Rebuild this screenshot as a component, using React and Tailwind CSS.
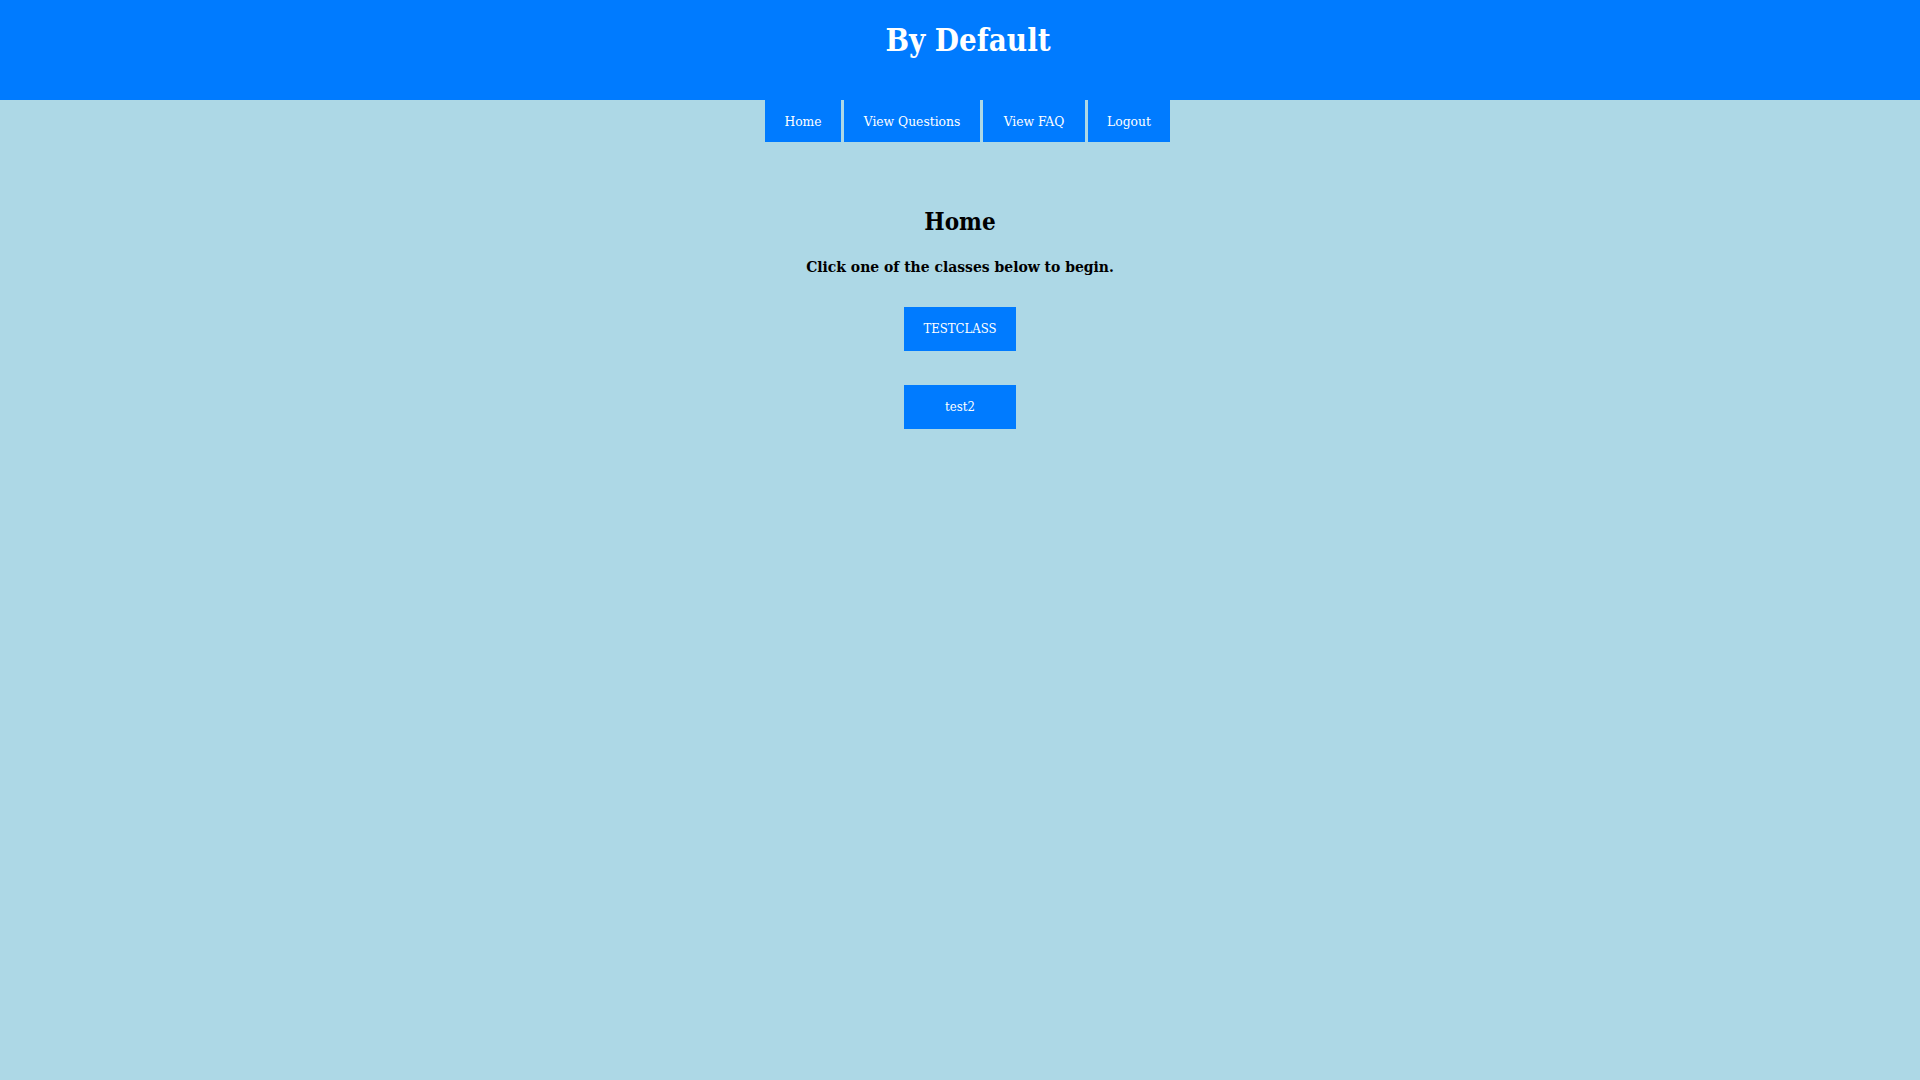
import React from "react";

const navItems = [
    { label: "Home", w: "w-[76px]" },
    { label: "View Questions", w: "w-[136px]" },
    { label: "View FAQ", w: "w-[102px]" },
    { label: "Logout", w: "w-[82px]" },
];

const classes = ["TESTCLASS", "test2"];

export default function App() {
    return (
        <div className="min-h-screen bg-[#ADD8E6] font-['Rockwell','DejaVu_Serif_Condensed','DejaVu_Serif',serif]">
            {/* Header */}
            <header className="h-[100px] bg-[#007BFF] pt-[22px] pl-4 text-center">
                <h1 className="text-[31px] leading-[36px] font-bold text-white">By Default</h1>
            </header>

            {/* Nav */}
            <nav className="flex justify-center gap-[3px] pl-[15px]">
                {navItems.map((item) => (
                    <a
                        key={item.label}
                        href="#"
                        className={`${item.w} h-[42px] bg-[#007BFF] text-white text-[13.7px] flex items-center justify-center`}
                    >
                        {item.label}
                    </a>
                ))}
            </nav>

            {/* Content */}
            <main className="flex flex-col items-center pt-[66px] text-black">
                <h2 className="text-[24px] leading-[28px] font-bold">Home</h2>
                <p className="mt-[21px] text-[15.5px] leading-[20px] font-bold">
                    Click one of the classes below to begin.
                </p>
                <div className="mt-[30px] flex flex-col items-center gap-[34px]">
                    {classes.map((c) => (
                        <button
                            key={c}
                            className="w-[112px] h-[44px] bg-[#007BFF] text-white text-[13px]"
                        >
                            {c}
                        </button>
                    ))}
                </div>
            </main>
        </div>
    );
}
